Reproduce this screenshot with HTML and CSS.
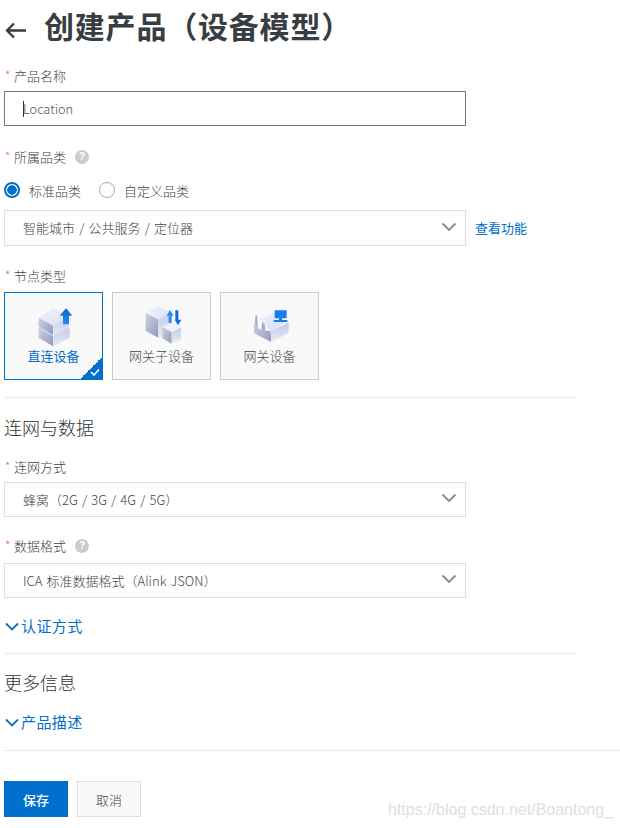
FILE: index.html
```html
<!DOCTYPE html>
<html lang="zh">
<head>
<meta charset="utf-8">
<title>创建产品（设备模型）</title>
<link rel="stylesheet" href="styles.css">
</head>
<body>
<svg class="defs" width="0" height="0" aria-hidden="true">
  <defs>
    <linearGradient id="topFace" x1="0" y1="0" x2="1" y2="1"><stop offset="0" stop-color="#f0f3fc"/><stop offset="1" stop-color="#d3daf2"/></linearGradient>
    <linearGradient id="leftFace" x1="0" y1="0" x2="1" y2="1"><stop offset="0" stop-color="#cdd2e4"/><stop offset="1" stop-color="#9299b6"/></linearGradient>
    <linearGradient id="rightFace" x1="0" y1="0" x2="0" y2="1"><stop offset="0" stop-color="#c3cbe6"/><stop offset="1" stop-color="#e6eaf8"/></linearGradient>
    <linearGradient id="blueUp" x1="0" y1="0" x2="0" y2="1"><stop offset="0" stop-color="#0a62d8"/><stop offset="1" stop-color="#2a8af5"/></linearGradient>
  </defs>
</svg>
<main class="page">
  <header class="title-row">
    <svg class="back" width="24" height="18" viewBox="0 0 24 18"><path d="M22 9.500H3M10 2.500L3 9.500L10 16.500" fill="none" stroke="#373d41" stroke-width="2.300"/></svg>
    <h1 class="title">创建产品（设备模型）</h1>
  </header>

  <div class="label label-name"><span class="req">*</span>产品名称</div>
  <div class="input"><span class="caret"></span>Location</div>

  <div class="label label-cat"><span class="req">*</span>所属品类<span class="help">?</span></div>
  <div class="radios">
    <span class="radio radio-on"></span><span class="radio-text">标准品类</span>
    <span class="radio"></span><span class="radio-text">自定义品类</span>
  </div>
  <div class="select-row">
    <div class="select select-tall"><span>智能城市 / 公共服务 / 定位器</span><svg class="chev" width="16" height="10" viewBox="0 0 16 10"><path d="M1.500 1.500L8 8L14.500 1.500" fill="none" stroke="#888" stroke-width="1.800"/></svg></div>
    <a class="link see">查看功能</a>
  </div>

  <div class="label label-node"><span class="req">*</span>节点类型</div>
  <div class="cards">
    <div class="card card-on">
      <svg class="card-icon" width="39" height="41" viewBox="103 55 117 123">
        <path d="M117 120L160 100L208 120V148L160 176L117 150Z" fill="url(#rightFace)"/>
        <path d="M117 122L160 146V176L117 150Z" fill="url(#leftFace)"/>
        <path d="M160 146L210 122V150L160 176Z" fill="url(#rightFace)"/>
        <path d="M117 90L160 62L208 86V116L160 142L117 116Z" fill="url(#topFace)"/>
        <path d="M117 90L160 114V142L117 116Z" fill="url(#leftFace)"/>
        <path d="M160 114L208 90V116L160 142Z" fill="url(#rightFace)"/>
        <path d="M180 84L199 62L218 84H208V110H190V84Z" fill="url(#blueUp)"/>
      </svg>
      <span class="card-text">直连设备</span>
      <span class="corner"><svg width="10" height="8" viewBox="0 0 10 8"><path d="M1 4L4 7L9 1.500" fill="none" stroke="#fff" stroke-width="1.600"/></svg></span>
    </div>
    <div class="card">
      <svg class="card-icon" width="39" height="41" viewBox="96 55 117 123">
        <path d="M107 76L145 55L180 72V132L145 150L107 130Z" fill="url(#topFace)"/>
        <path d="M107 76L145 96V150L107 130Z" fill="url(#leftFace)"/>
        <path d="M145 96L180 78V132L145 150Z" fill="url(#rightFace)"/>
        <path d="M157 118L185 103L214 118L185 134Z" fill="#eef1fb"/>
        <path d="M157 118L185 134V168L157 152Z" fill="url(#leftFace)"/>
        <path d="M185 134L214 118V154L185 168Z" fill="url(#rightFace)"/>
        <path d="M180 67L191 84H185V106H176V84H170Z" fill="#2a8af5"/>
        <path d="M196 68H205V96H214L204 113L194 96H196Z" fill="#0f6ae0"/>
      </svg>
      <span class="card-text">网关子设备</span>
    </div>
    <div class="card">
      <svg class="card-icon" width="39" height="41" viewBox="96 55 117 123">
        <path d="M112 84L117 82L120 125H110ZM133 92L139 92L142 130H130Z" fill="#a5adc9"/>
        <path d="M108 108L122 122L130 128L158 130L160 163L108 137Z" fill="url(#leftFace)"/>
        <path d="M125 95L165 74L208 100L158 130Z" fill="url(#topFace)"/>
        <path d="M158 130L212 104V136L160 163Z" fill="url(#rightFace)"/>
        <path d="M170 68H206V92H192V97H208V103H167V97H183V92H170Z" fill="#167cf0"/>
      </svg>
      <span class="card-text">网关设备</span>
    </div>
  </div>
  <hr class="rule rule-short rule-first">

  <h2 class="section section-net">连网与数据</h2>
  <div class="label label-conn"><span class="req">*</span>连网方式</div>
  <div class="select"><span>蜂窝（2G / 3G / 4G / 5G）</span><svg class="chev" width="16" height="10" viewBox="0 0 16 10"><path d="M1.500 1.500L8 8L14.500 1.500" fill="none" stroke="#888" stroke-width="1.800"/></svg></div>
  <div class="label label-data"><span class="req">*</span>数据格式<span class="help">?</span></div>
  <div class="select select-data"><span>ICA 标准数据格式（Alink JSON）</span><svg class="chev" width="16" height="10" viewBox="0 0 16 10"><path d="M1.500 1.500L8 8L14.500 1.500" fill="none" stroke="#888" stroke-width="1.800"/></svg></div>
  <a class="link expand expand-auth"><svg width="14" height="9" viewBox="0 0 14 9"><path d="M1 1.500L7 7.500L13 1.500" fill="none" stroke="#0070cc" stroke-width="1.800"/></svg>认证方式</a>
  <hr class="rule rule-short rule-auth">

  <h2 class="section section-more">更多信息</h2>
  <a class="link expand expand-desc"><svg width="14" height="9" viewBox="0 0 14 9"><path d="M1 1.500L7 7.500L13 1.500" fill="none" stroke="#0070cc" stroke-width="1.800"/></svg>产品描述</a>
  <hr class="rule rule-full">

  <div class="actions">
    <button class="btn btn-primary">保存</button>
    <button class="btn">取消</button>
  </div>
</main>
<div class="watermark">https://blog.csdn.net/Boantong_</div>
</body>
</html>
```

FILE: styles.css
```css
* { box-sizing: border-box; }
html, body { margin: 0; padding: 0; }
body {
  width: 620px;
  height: 828px;
  overflow: hidden;
  position: relative;
  background: #fff;
  color: #444;
  font-family: "Noto Sans CJK SC", "Liberation Sans", sans-serif;
  font-size: 13px;
  font-weight: 300;
}
.defs { position: absolute; }
.page { padding-left: 4px; display: flex; flex-direction: column; align-items: flex-start; }

.title-row { display: flex; align-items: center; height: 56px; }
.back { margin-top: 3px; }
.title { margin: 0 0 6px 16px; font-size: 30px; letter-spacing: 0.800px; line-height: 50px; font-weight: 700; color: #373d41; white-space: nowrap; }

.label { display: flex; align-items: center; height: 20px; color: #444; font-size: 13px; line-height: 20px; }
.req { color: #e6655f; width: 10px; font-size: 12px; margin-top: -2px; margin-left: 1px; margin-right: -1px; }
.label-name { margin-top: 10px; }
.label-cat { margin-top: 21px; }
.label-node { margin-top: 20px; }
.label-conn { margin-top: 17px; }
.label-data { margin-top: 19px; }

.help {
  width: 14px; height: 14px; margin-left: 9px; border-radius: 50%;
  background: #ccc; color: #fff; font-size: 10px; line-height: 14px; text-align: center; font-weight: 700;
  font-family: "Liberation Sans", sans-serif;
}

.input {
  width: 462px; height: 35px; margin-top: 5px; padding-left: 18px;
  border: 1px solid #777; display: flex; align-items: center; color: #555; font-size: 12.800px;
}
.caret { width: 1px; height: 16px; background: #333; margin-right: -1px; }

.radios { display: flex; align-items: center; height: 20px; margin-top: 13px; font-size: 13px; color: #444; }
.radio { width: 16px; height: 16px; border-radius: 50%; border: 1px solid #aaa; background: #fff; }
.radio-on { border: 2px solid #0070cc; position: relative; background: radial-gradient(circle, #0070cc 0 4.500px, #fff 5px); }
.radio-text { margin-left: 9px; margin-right: 18px; }

.select-row { display: flex; align-items: flex-start; margin-top: 10px; }
.select {
  width: 462px; height: 35px; padding: 0 8px 0 18px; margin-top: 5px;
  display: flex; align-items: center; justify-content: space-between;
  border: 1px solid #ddd; color: #444; font-size: 13px; word-spacing: 1.300px;
}
.select span { margin-top: -1px; }
.select-tall { height: 36px; margin-top: 0; }
.select-tall span { margin-top: -2px; }
.select-data { margin-top: 7px; }
.chev { margin-top: -3px; }
.link { color: #0070cc; font-weight: 400; }
.see { margin-left: 9px; font-size: 13px; line-height: 36px; }

.cards { display: flex; gap: 9px; margin-top: 6px; }
.card {
  position: relative; width: 99px; height: 88px;
  background: #f9f9f9; border: 1px solid #ccc;
  display: flex; flex-direction: column; align-items: center; padding-top: 13px;
}
.card-on { border-color: #0070cc; }
.card-icon { flex: none; display: block; }
.card-text { margin-top: 0; font-size: 13px; line-height: 18px; color: #444; }
.card-on .card-text { color: #0070cc; font-weight: 400; }
.corner {
  position: absolute; right: 0; bottom: 0; width: 22px; height: 22px;
  background: linear-gradient(135deg, transparent 50%, #0070cc 50%);
}
.corner svg { position: absolute; right: 2px; bottom: 3px; }

.rule { border: 0; height: 1px; background: #e9e9e9; margin: 0; }
.rule-short { width: 572px; }
.rule-first { margin-top: 17px; }
.rule-auth { margin-top: 17px; }
.rule-full { width: 616px; margin-top: 18px; }

.section { margin: 0; font-size: 18px; font-weight: 300; line-height: 26px; color: #333; }
.section-net { margin-top: 16px; }
.section-more { margin-top: 15px; }

.expand { display: flex; align-items: center; font-size: 15px; letter-spacing: 0.400px; line-height: 20px; gap: 2px; margin-left: 1px; }
.expand-auth { margin-top: 18px; }
.expand-desc { margin-top: 17px; }

.actions { display: flex; gap: 9px; margin-top: 30px; }
.btn {
  width: 64px; height: 36px; background: #f9f9f9; border: 1px solid #ddd; padding: 0;
  font: inherit; font-size: 13px; color: #444;
}
.btn-primary { background: #0070cc; border-color: #0070cc; color: #fff; font-weight: 500; }

.watermark {
  position: absolute; left: 388px; top: 799px;
  font-family: "Liberation Sans", sans-serif; font-size: 16px; line-height: 22px; color: #e0e0e0; white-space: nowrap;
}
```
